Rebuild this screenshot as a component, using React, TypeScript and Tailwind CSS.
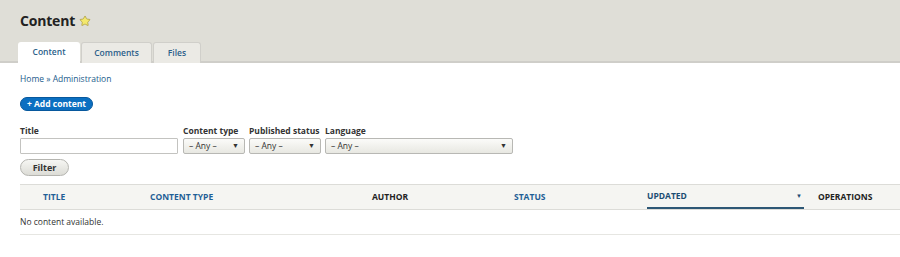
import { Star } from 'lucide-react';

const font = { fontFamily: '"Open Sans", "Liberation Sans", sans-serif' };

function Select({ w }: { w: string }) {
  return (
    <div className={`${w} h-[16px] flex items-center justify-between px-[5px] border border-[#b8b8b4] rounded-[2px] bg-gradient-to-b from-[#fbfbf9] to-[#e8e8e2] text-[8.5px] text-[#333]`}>
      <span>– Any –</span>
      <span className="text-[7px] text-[#333]">▼</span>
    </div>
  );
}

function Label({ children }: { children: string }) {
  return <div className="text-[8.5px] font-bold text-[#333] leading-[11px] mb-[2px]">{children}</div>;
}

export default function App() {
  return (
    <div className="w-[900px] h-[257px] bg-white overflow-hidden" style={font}>
      {/* Header */}
      <div className="h-[63px] bg-[#dfded7] border-b-2 border-[#cfcec9] flex flex-col justify-between">
        <div className="flex items-center gap-[4px] pl-[20px] pt-[12px]">
          <h1 className="text-[14px] font-bold text-[#222] tracking-[-0.2px] leading-[18px]">Content</h1>
          <Star size={12} className="text-[#a89a3c] fill-[#f4e96d]" strokeWidth={1.5} />
        </div>
        <div className="flex pl-[18px] gap-[1px] -mb-[2px]">
          <div className="w-[62px] h-[21px] bg-white rounded-t-[3px] flex items-center justify-center text-[8.5px] font-semibold text-[#2b5f8a]">Content</div>
          <div className="w-[71px] h-[21px] bg-[#ebeae5] border border-b-0 border-[#d0cfca] rounded-t-[3px] flex items-center justify-center text-[8.5px] font-semibold text-[#2b5f8a]">Comments</div>
          <div className="w-[48px] h-[21px] bg-[#ebeae5] border border-b-0 border-[#d0cfca] rounded-t-[3px] flex items-center justify-center text-[8.5px] font-semibold text-[#2b5f8a]">Files</div>
        </div>
      </div>

      {/* Body */}
      <div className="pl-[20px]">
        <div className="pt-[10px] text-[8.5px] text-[#1d5b8c] leading-[12px]">Home » Administration</div>
        <div className="pt-[12px]">
          <button className="h-[14px] w-[73px] rounded-full bg-[#0b6fc1] border border-[#07589d] text-white text-[8.5px] font-bold flex items-center justify-center leading-none">
            + Add content
          </button>
        </div>

        <div className="flex gap-[4px] pt-[14px]">
          <div>
            <Label>Title</Label>
            <div className="w-[158px] h-[16px] border border-[#c3c3c0] bg-white rounded-[1px]" />
          </div>
          <div className="ml-[1px]">
            <Label>Content type</Label>
            <Select w="w-[62px]" />
          </div>
          <div>
            <Label>Published status</Label>
            <Select w="w-[72px]" />
          </div>
          <div>
            <Label>Language</Label>
            <Select w="w-[188px]" />
          </div>
        </div>

        <div className="pt-[5px]">
          <button className="h-[17px] w-[49px] rounded-full bg-gradient-to-b from-[#f6f6f3] to-[#dcdcd6] border border-[#b5b5b0] text-[9px] font-bold text-[#333] flex items-center justify-center leading-none">
            Filter
          </button>
        </div>

        {/* Table */}
        <div className="mt-[8px]">
          <div className="h-[26px] flex items-center bg-[#f5f5f2] border-t border-[#dcdcd8] border-b border-[#d2d2ce] text-[8.5px] font-bold uppercase">
            <div className="w-[118px] pl-[23px] text-[#1f5f96]">Title</div>
            <div className="w-[222px] pl-[12px] text-[#1f5f96]">Content type</div>
            <div className="w-[142px] pl-[12px] text-[#222]">Author</div>
            <div className="w-[133px] pl-[12px] text-[#1f5f96]">Status</div>
            <div className="w-[171px] pl-[12px] pr-[2px] h-full flex items-stretch">
              <div className="flex-1 flex items-center justify-between border-b-2 border-[#2d5775] text-[#1c4d72] pr-[2px]">
                <span>Updated</span>
                <span className="text-[6px]">▼</span>
              </div>
            </div>
            <div className="pl-[12px] text-[#222]">Operations</div>
          </div>
          <div className="h-[25px] flex items-center border-b border-[#e6e6e2] text-[8.5px] text-[#333] pt-[1px]">
            No content available.
          </div>
        </div>
      </div>
    </div>
  );
}
